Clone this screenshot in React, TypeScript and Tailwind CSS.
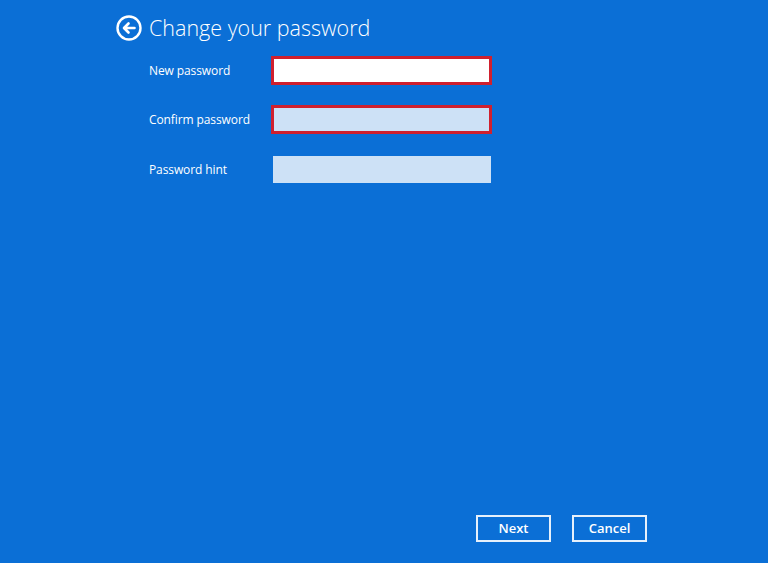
export default function App() {
  const fields = [
    { label: "New password", cls: "h-[29px] w-[221px] border-[3px] border-[#d0202e] bg-white", mt: "mt-0" },
    { label: "Confirm password", cls: "h-[29px] w-[221px] border-[3px] border-[#d0202e] bg-[#cde1f6]", mt: "mt-[20px]" },
    { label: "Password hint", cls: "h-[27px] w-[218px] ml-[2px] bg-[#cde1f6]", mt: "mt-[22px]" },
  ];

  return (
    <div className="flex h-[563px] w-[768px] flex-col bg-[#0b6fd6] font-['Open_Sans',sans-serif] text-white">
      <div className="ml-[116px] mt-[15px] flex items-center gap-[7px]">
        <svg width="26" height="26" viewBox="0 0 26 26" fill="none">
          <circle cx="13" cy="13" r="11.5" stroke="white" strokeWidth="2.4" />
          <path
            d="M18.5 13H8.5M12.5 8.5L8 13l4.5 4.5"
            stroke="white"
            strokeWidth="2.6"
            strokeLinecap="round"
            strokeLinejoin="round"
          />
        </svg>
        <h1 className="text-[21.5px] font-light leading-[26px]">Change your password</h1>
      </div>

      <div className="ml-[149px] mt-[15px] flex flex-col">
        {fields.map((f) => (
          <div key={f.label} className={`flex items-center ${f.mt}`}>
            <span className="w-[122px] text-[12px] leading-none tracking-[-0.1px]">{f.label}</span>
            <div className={f.cls} />
          </div>
        ))}
      </div>

      <div className="mt-auto mb-[21px] ml-[476px] flex gap-[21px]">
        <button className="h-[27px] w-[75px] border-2 border-[#e6f0fb] text-[13px] font-semibold">
          Next
        </button>
        <button className="h-[27px] w-[75px] border-2 border-[#e6f0fb] text-[13px] font-semibold">
          Cancel
        </button>
      </div>
    </div>
  );
}
